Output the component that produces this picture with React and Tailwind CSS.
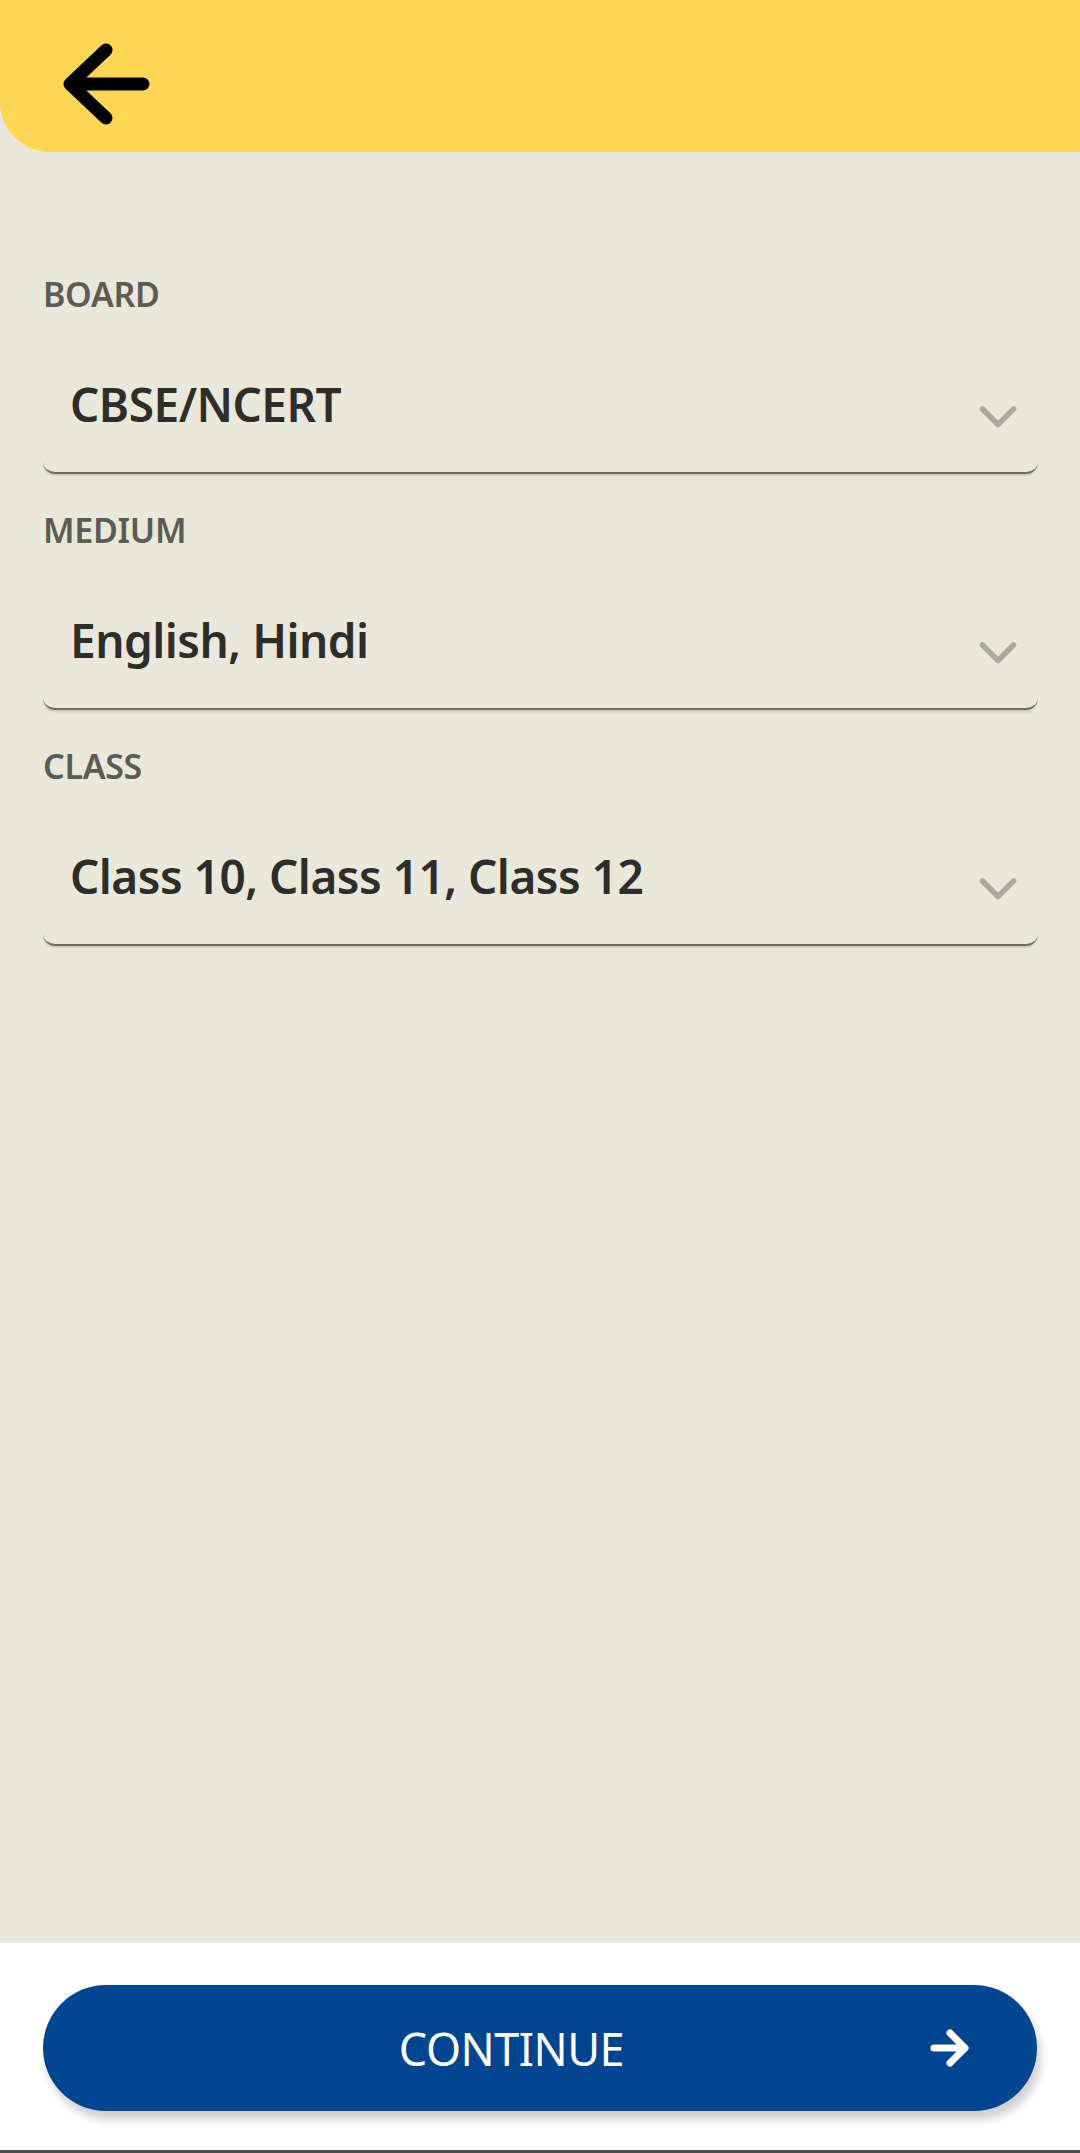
import React from "react";

const fields = [
  { label: "BOARD", value: "CBSE/NCERT" },
  { label: "MEDIUM", value: "English, Hindi" },
  { label: "CLASS", value: "Class 10, Class 11, Class 12" },
];

function Chevron() {
  return (
    <svg width="38" height="26" viewBox="0 0 38 26" fill="none" className="shrink-0 mt-[28px]">
      <polyline
        points="3.5,4 19,19.5 34.5,4"
        stroke="#aaa99f"
        strokeWidth="5.5"
        strokeLinecap="round"
        strokeLinejoin="round"
      />
    </svg>
  );
}

function SelectField({ label, value }) {
  return (
    <div className="flex flex-col">
      <div className="h-[40px] leading-[40px] text-[34px] font-semibold text-[#5c5b55] tracking-[-0.3px]">
        {label}
      </div>
      <div className="h-[160px] flex items-center pt-[22px] pl-[27px] pr-[21px] border-b-2 border-[#6e6d62] rounded-b-[12px] shadow-[0_3px_2px_-1px_rgba(0,0,0,0.12)]">
        <span className="flex-1 text-[46px] font-semibold text-[#2e2d29] tracking-[-0.5px] truncate">
          {value}
        </span>
        <Chevron />
      </div>
    </div>
  );
}

export default function App() {
  return (
    <div
      className="w-[1080px] h-[2153px] flex flex-col bg-white"
      style={{ fontFamily: '"Noto Sans", "Open Sans", sans-serif' }}
    >
      {/* Header */}
      <div className="bg-[#eae8da]">
        <div className="h-[152px] bg-[#ffd754] rounded-bl-[50px] flex items-center pl-[50px] pt-[16px]">
          <svg width="100" height="100" viewBox="0 0 100 100" fill="none">
            <path
              d="M93 50H20M56 16L20 50L56 84"
              stroke="#000"
              strokeWidth="13"
              strokeLinecap="round"
              strokeLinejoin="round"
            />
          </svg>
        </div>
      </div>

      {/* Form */}
      <div className="flex-1 bg-[#eae8da] pt-[122px] pl-[43px] pr-[42px] flex flex-col gap-[36px]">
        {fields.map((f) => (
          <SelectField key={f.label} label={f.label} value={f.value} />
        ))}
      </div>

      {/* Footer */}
      <div className="h-[210px] bg-white pt-[42px] px-[43px] border-b-[3px] border-[#4d4d4d]">
        <button className="w-full h-[126px] rounded-full bg-[#004590] flex items-center pl-[60px] pr-[67px] shadow-[4px_9px_8px_rgba(0,0,0,0.18)]">
          <span className="flex-1 text-center text-white text-[45px] leading-none tracking-[-0.5px]">CONTINUE</span>
          <svg width="40" height="38" viewBox="0 0 40 38" fill="none" className="ml-[10px]">
            <path
              d="M4 19H35M20 4L35 19L20 34"
              stroke="#fff"
              strokeWidth="7"
              strokeLinecap="round"
              strokeLinejoin="round"
            />
          </svg>
        </button>
      </div>
    </div>
  );
}
